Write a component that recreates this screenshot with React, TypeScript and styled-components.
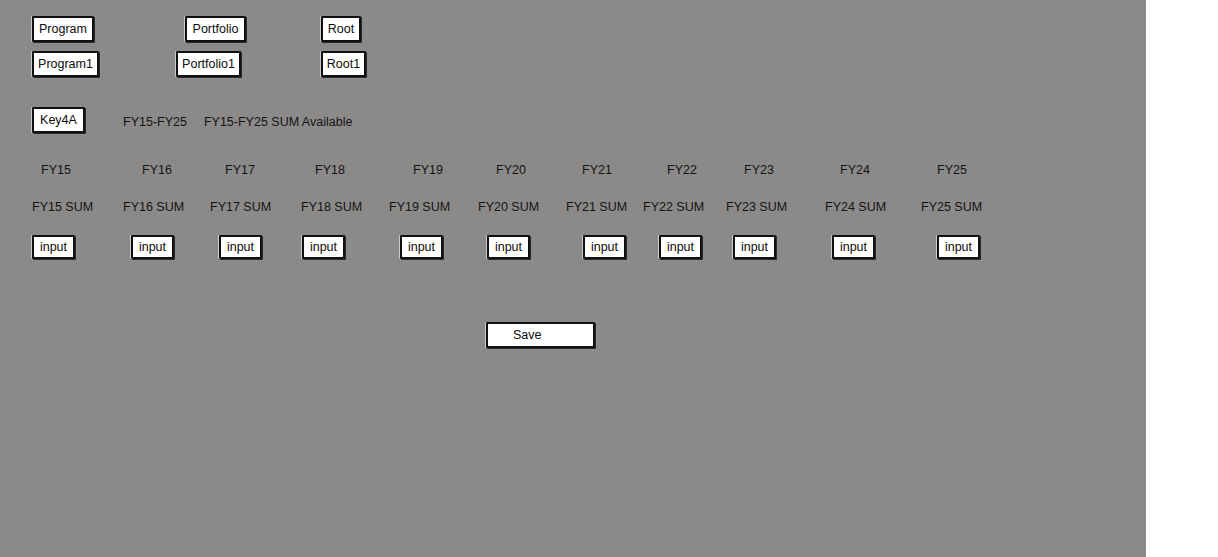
import React from "react";
import styled, { createGlobalStyle } from "styled-components";

const Global = createGlobalStyle`
  html, body { margin: 0; padding: 0; background: #ffffff; }
  body { font-family: "Liberation Sans", Arial, sans-serif; }
`;

const Page = styled.div`
  display: flex;
  width: 1218px;
  height: 557px;
  overflow: hidden;
`;

const Canvas = styled.div`
  width: 1146px;
  height: 557px;
  background: #8b8a89;
  box-sizing: border-box;
  padding: 16px 0 0 32px;
  display: flex;
  flex-direction: column;
  color: #141414;
  font-size: 12.5px;
`;

const Filler = styled.div`
  flex: 1;
  background: #ffffff;
`;

const Row = styled.div<{ $gap?: number }>`
  display: flex;
  align-items: center;
  margin-top: ${(p) => p.$gap ?? 0}px;
  height: 26px;
`;

const Box = styled.div<{ $w: number; $at?: number; $h?: number; $left?: boolean }>`
  box-sizing: border-box;
  width: ${(p) => p.$w}px;
  height: ${(p) => p.$h ?? 26}px;
  margin-left: ${(p) => p.$at ?? 0}px;
  background: #ffffff;
  border: 2px solid #111111;
  border-radius: 1px;
  box-shadow: 1px 1px 0 #2a2a2a, -1px 0 0 rgba(255, 255, 255, 0.55);
  display: flex;
  align-items: center;
  justify-content: ${(p) => (p.$left ? "flex-start" : "center")};
  padding: 0 4px 1px;
  color: #0c0c0c;
  font-size: 12.5px;
  white-space: nowrap;
  flex-shrink: 0;
`;

const Label = styled.span<{ $at?: number }>`
  margin-left: ${(p) => p.$at ?? 0}px;
  margin-top: 3px;
  white-space: nowrap;
  line-height: 16px;
`;

const Grid = styled.div`
  display: flex;
  margin-top: 29px;
`;

const Column = styled.div<{ $w: number }>`
  width: ${(p) => p.$w}px;
  display: flex;
  flex-direction: column;
  align-items: flex-start;
  flex-shrink: 0;
`;

const Cell = styled.div<{ $indent: number; $gap?: number }>`
  margin-left: ${(p) => p.$indent}px;
  margin-top: ${(p) => p.$gap ?? 0}px;
  height: 16px;
  line-height: 16px;
  white-space: nowrap;
`;

const InputBox = styled(Box)<{ $indent: number }>`
  margin-left: ${(p) => p.$indent}px;
  margin-top: 20px;
`;

const SaveRow = styled.div`
  display: flex;
  margin-top: 63px;
`;

const SaveButton = styled(Box)`
  padding-left: 25px;
`;

type Col = { fy: string; w: number; lab: number; inp: number };

const cols: Col[] = [
  { fy: "FY15", w: 91, lab: 9, inp: 0 },
  { fy: "FY16", w: 87, lab: 19, inp: 8 },
  { fy: "FY17", w: 91, lab: 15, inp: 9 },
  { fy: "FY18", w: 88, lab: 14, inp: 1 },
  { fy: "FY19", w: 89, lab: 24, inp: 11 },
  { fy: "FY20", w: 88, lab: 18, inp: 9 },
  { fy: "FY21", w: 77, lab: 16, inp: 17 },
  { fy: "FY22", w: 83, lab: 24, inp: 16 },
  { fy: "FY23", w: 99, lab: 18, inp: 7 },
  { fy: "FY24", w: 96, lab: 15, inp: 7 },
  { fy: "FY25", w: 80, lab: 16, inp: 16 },
];

export default function App() {
  return (
    <>
      <Global />
      <Page>
        <Canvas>
          <Row>
            <Box $w={62}>Program</Box>
            <Box $w={61} $at={91}>Portfolio</Box>
            <Box $w={40} $at={75}>Root</Box>
          </Row>
          <Row $gap={9}>
            <Box $w={67}>Program1</Box>
            <Box $w={65} $at={77}>Portfolio1</Box>
            <Box $w={45} $at={80}>Root1</Box>
          </Row>
          <Row $gap={30}>
            <Box $w={53}>Key4A</Box>
            <Label $at={38}>FY15-FY25</Label>
            <Label $at={17}>FY15-FY25 SUM Available</Label>
          </Row>
          <Grid>
            {cols.map((c) => (
              <Column key={c.fy} $w={c.w}>
                <Cell $indent={c.lab}>{c.fy}</Cell>
                <Cell $indent={0} $gap={21}>
                  {c.fy} SUM
                </Cell>
                <InputBox $w={43} $h={24} $indent={c.inp}>
                  input
                </InputBox>
              </Column>
            ))}
          </Grid>
          <SaveRow>
            <SaveButton $w={109} $at={454} $left>
              Save
            </SaveButton>
          </SaveRow>
        </Canvas>
        <Filler />
      </Page>
    </>
  );
}
